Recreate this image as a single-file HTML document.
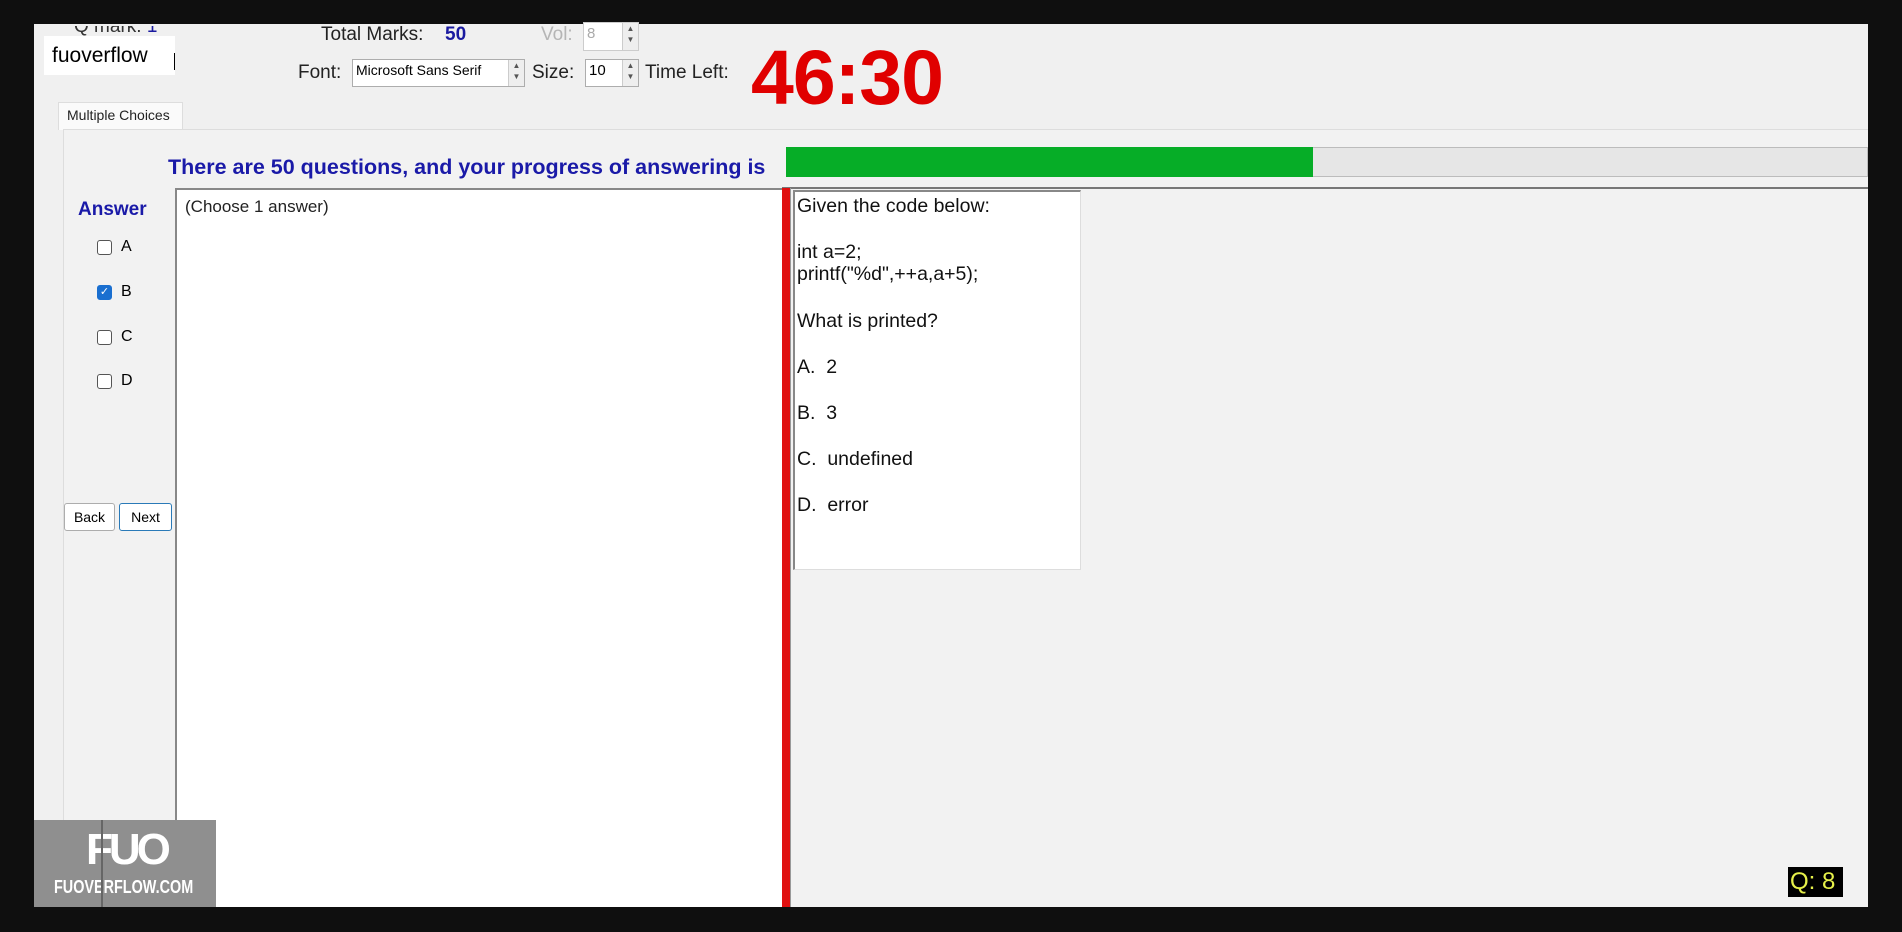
<!DOCTYPE html>
<html><head><meta charset="utf-8"><style>
*{margin:0;padding:0;box-sizing:border-box}
body{width:1902px;height:932px;background:#0f0f0f;position:relative;overflow:hidden;font-family:"Liberation Sans",Arial,sans-serif}
.a{position:absolute}
#app{left:34px;top:24px;width:1834px;height:883px;background:#f0f0f0;overflow:hidden}
.t{position:absolute;white-space:nowrap}
.spin{position:absolute;background:#fff;border:1px solid #adadad;font-size:15px;padding:2px 3px;color:#000}
.arr{position:absolute;right:0;top:0;width:16px;height:100%;border-left:1px solid #ccc;background:#eee;font-size:8px;line-height:11px;text-align:center;color:#555}
.cb{position:absolute;width:15px;height:15px;border:1px solid #555;border-radius:3px;background:#fff}
.btn{position:absolute;border:1px solid #adadad;background:#fff;border-radius:3px;font-size:14px;text-align:center;line-height:26px}
.q{position:absolute;left:797px;font-size:19.5px;color:#111;white-space:nowrap}
</style></head><body>
<div id="app" class="a">
</div>
<div class="t" style="left:74px;top:16px;font-size:19px;color:#333;clip-path:inset(10px 0 0 0)">Q mark: <span style="color:#1a1aa0">1</span></div>
<div class="a" style="left:44px;top:36px;width:131px;height:39px;background:#fff"></div>
<div class="t" style="left:52px;top:44px;font-size:21px;color:#000">fuoverflow</div>
<div class="a" style="left:174px;top:53px;width:1px;height:17px;background:#000"></div>
<div class="t" style="left:321px;top:24px;font-size:19px;color:#222">Total Marks:</div>
<div class="t" style="left:445px;top:24px;font-size:19px;color:#1a1aa0;font-weight:bold">50</div>
<div class="t" style="left:541px;top:24px;font-size:19px;color:#b5b5b5">Vol:</div>
<div class="spin" style="left:583px;top:22px;width:56px;height:29px;color:#aaa;border-color:#ccc">8<div class="arr">▲<br>▼</div></div>
<div class="t" style="left:298px;top:62px;font-size:19px;color:#222">Font:</div>
<div class="spin" style="left:352px;top:59px;width:173px;height:28px;font-size:14px">Microsoft Sans Serif<div class="arr">▲<br>▼</div></div>
<div class="t" style="left:532px;top:62px;font-size:19px;color:#222">Size:</div>
<div class="spin" style="left:585px;top:59px;width:54px;height:28px">10<div class="arr">▲<br>▼</div></div>
<div class="t" style="left:645px;top:62px;font-size:19px;color:#222">Time Left:</div>
<div class="t" style="left:751px;top:34px;font-size:77px;font-weight:bold;color:#e00000;letter-spacing:-1px">46:30</div>
<div class="a" style="left:58px;top:102px;width:125px;height:28px;background:#fafafa;border:1px solid #ddd;border-bottom:none"></div>
<div class="t" style="left:67px;top:107px;font-size:14px;color:#222">Multiple Choices</div>
<div class="a" style="left:63px;top:129px;width:1805px;height:778px;background:#f2f2f2;border-top:1px solid #ddd;border-left:1px solid #ddd"></div>
<div class="t" style="left:168px;top:155px;font-size:21.5px;font-weight:bold;color:#1a1aa8">There are 50 questions, and your progress of answering is</div>
<div class="a" style="left:786px;top:147px;width:1082px;height:30px;background:#e6e6e6;border:1px solid #bcbcbc"></div>
<div class="a" style="left:786px;top:147px;width:527px;height:30px;background:#06ad27"></div>
<div class="a" style="left:782px;top:187px;width:1086px;height:2px;background:#777"></div>
<div class="a" style="left:175px;top:188px;width:607px;height:719px;background:#fff;border:2px solid #888;border-bottom:none;border-right:none"></div>
<div class="t" style="left:185px;top:197px;font-size:17px;color:#222">(Choose 1 answer)</div>
<div class="a" style="left:782px;top:188px;width:9px;height:719px;background:#e01010;border-right:1px solid #999"></div>
<div class="a" style="left:793px;top:190px;width:288px;height:380px;background:#fff;border:1px solid #ddd;border-top:2px solid #888;border-left:2px solid #888"></div>
<div class="q" style="top:195px">Given the code below:</div>
<div class="q" style="top:241px">int a=2;</div>
<div class="q" style="top:263px">printf("%d",++a,a+5);</div>
<div class="q" style="top:310px">What is printed?</div>
<div class="q" style="top:356px">A.&nbsp; 2</div>
<div class="q" style="top:402px">B.&nbsp; 3</div>
<div class="q" style="top:448px">C.&nbsp; undefined</div>
<div class="q" style="top:494px">D.&nbsp; error</div>
<div class="t" style="left:78px;top:199px;font-size:19px;font-weight:bold;color:#1a1aa8">Answer</div>
<div class="cb" style="left:97px;top:240px"></div><div class="t" style="left:121px;top:238px;font-size:16px">A</div>
<div class="cb" style="left:97px;top:285px;background:#1a6fd0;border-color:#1a6fd0;color:#fff;font-size:11px;line-height:13px;text-align:center">✓</div><div class="t" style="left:121px;top:283px;font-size:16px">B</div>
<div class="cb" style="left:97px;top:330px"></div><div class="t" style="left:121px;top:328px;font-size:16px">C</div>
<div class="cb" style="left:97px;top:374px"></div><div class="t" style="left:121px;top:372px;font-size:16px">D</div>
<div class="btn" style="left:64px;top:503px;width:51px;height:28px">Back</div>
<div class="btn" style="left:119px;top:503px;width:53px;height:28px;border:1.5px solid #2a7ab8">Next</div>
<div class="a" style="left:34px;top:820px;width:182px;height:87px;background:#8f8f8f"></div>
<div class="t" style="left:86px;top:825px;font-size:44px;font-weight:bold;color:#fff;letter-spacing:-4px">FUO</div>
<div class="t" style="left:54px;top:877px;font-size:18px;font-weight:bold;color:#fff;transform:scaleX(.8);transform-origin:left">FUOVERFLOW.COM</div>
<div class="a" style="left:101px;top:820px;width:2px;height:87px;background:#666"></div>
<div class="a" style="left:1788px;top:867px;width:55px;height:30px;background:#000"></div>
<div class="t" style="left:1790px;top:868px;font-size:24px;color:#e6f04a">Q: 8</div>
</body></html>
